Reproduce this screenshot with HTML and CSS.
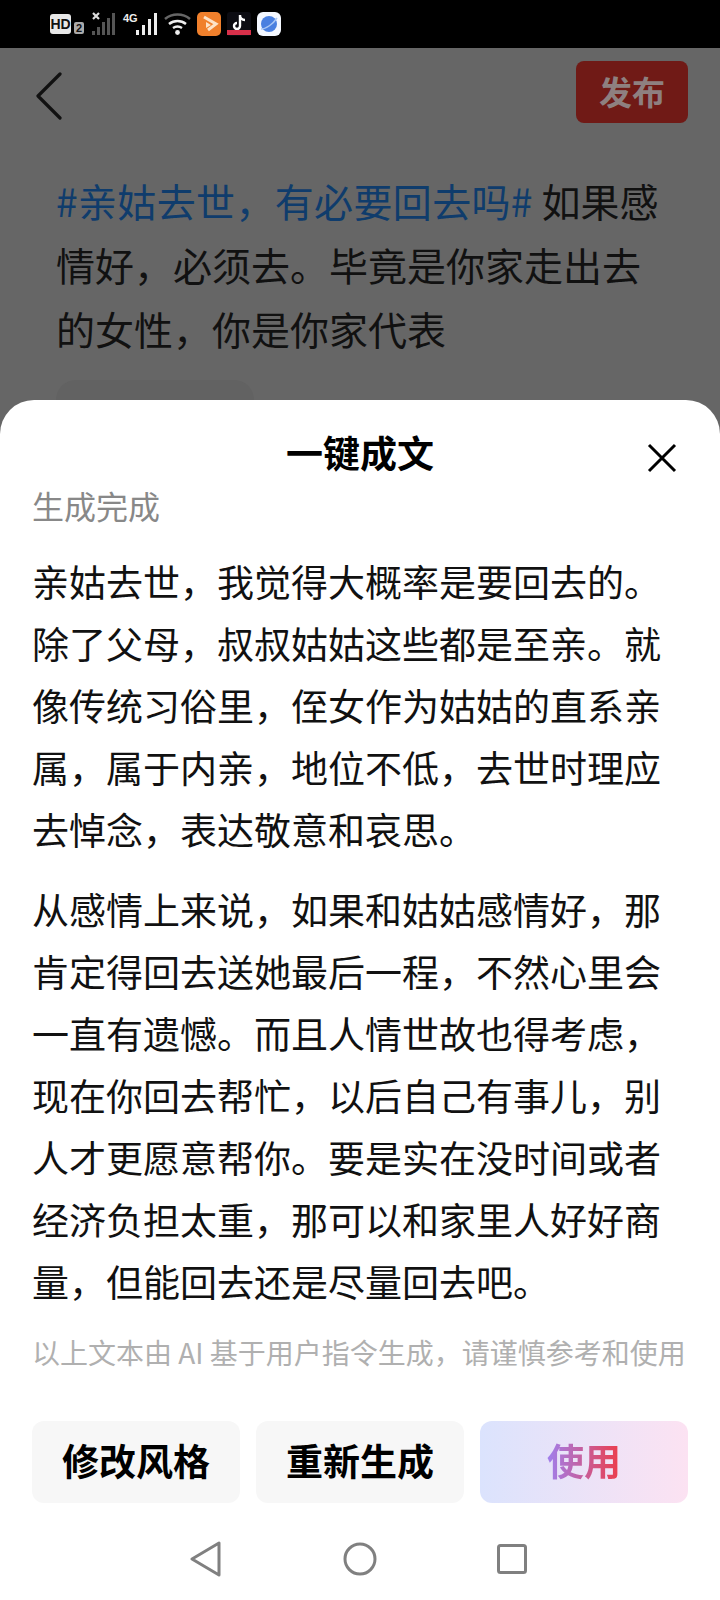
FILE: index.html
```html
<!DOCTYPE HTML>
<html>

	<head>
		<meta http-equiv="Content-Type" content="text/html; charset=utf-8">
		<link rel="stylesheet" href="styles.css">
	</head>

	<body>
		<div class="screen">
			<div class="status">
				<span class="hd">HD</span>
				<span class="sim">2</span>
				<svg class="sig" width="25" height="24" viewBox="0 0 25 24">
					<path d="M2 1l6 6M8 1L2 7" stroke="#ddd" stroke-width="2.2" fill="none"/>
					<g fill="#555">
						<rect x="1" y="19" width="3" height="4"/>
						<rect x="6" y="15" width="3" height="8"/>
						<rect x="11" y="10" width="3" height="13"/>
						<rect x="16" y="6" width="3" height="17"/>
						<rect x="21" y="1" width="3" height="22"/>
					</g>
				</svg>
				<span class="net">4G</span>
				<svg class="sig2" width="23" height="24" viewBox="0 0 23 24">
					<g fill="#eee">
						<rect x="1" y="18" width="3" height="5"/>
						<rect x="7" y="13" width="3" height="10"/>
						<rect x="13" y="7" width="3" height="16"/>
						<rect x="19" y="1" width="3" height="22"/>
					</g>
				</svg>
				<svg class="wifi" width="27" height="24" viewBox="0 0 27 24">
					<path d="M1 7c7-6 18-6 25 0" stroke="#666" stroke-width="2.5" fill="none"/>
					<path d="M5 12c5-4 12-4 17 0" stroke="#eee" stroke-width="2.5" fill="none"/>
					<path d="M9 16c3-2 6-2 9 0" stroke="#eee" stroke-width="2.5" fill="none"/>
					<circle cx="13.5" cy="20.5" r="2.4" fill="#eee"/>
				</svg>
				<svg class="app" width="24" height="24" viewBox="0 0 24 24">
					<rect width="24" height="24" rx="5" fill="#f0802c"/>
					<path d="M7 5l12 7-8 6" stroke="#fde3c8" stroke-width="3" fill="none"/>
					<path d="M9 10l5 3-5 3z" fill="#fde3c8"/>
				</svg>
				<svg class="app" width="24" height="24" viewBox="0 0 24 24">
					<rect width="24" height="24" rx="3" fill="#0c0c12"/>
					<path d="M13 3v11a3 3 0 1 1-3-3M13 3c0 3 2 5 5 5" stroke="#fff" stroke-width="2.4" fill="none"/>
					<rect y="18" width="24" height="5" fill="#d8304a"/>
				</svg>
				<svg class="app" width="24" height="24" viewBox="0 0 24 24">
					<rect width="24" height="24" rx="6" fill="#f4f8ff"/>
					<circle cx="12" cy="12" r="8" fill="#4a80e0"/>
					<path d="M4 17c5 0 12-5 16-11" stroke="#a9c6f4" stroke-width="1.5" fill="none"/>
				</svg>
			</div>

			<div class="behind">
				<div class="bar">
					<svg width="26" height="48" viewBox="0 0 26 48">
						<path d="M24 2L2 24l22 22" stroke="#111" stroke-width="3.2" fill="none" stroke-linecap="round" stroke-linejoin="round"/>
					</svg>
					<div class="publish">发布</div>
				</div>
				<div class="post"><span class="tag">#亲姑去世，有必要回去吗#</span> 如果感情好，必须去。毕竟是你家走出去的女性，你是你家代表</div>
				<div class="chip"></div>
			</div>

			<div class="sheet">
				<div class="head">
					<span></span>
					<div class="title">一键成文</div>
					<svg class="close" width="30" height="30" viewBox="0 0 30 30">
						<path d="M2 2l26 26M28 2L2 28" stroke="#000" stroke-width="3" fill="none"/>
					</svg>
				</div>
				<div class="state">生成完成</div>
				<div class="text">
					<p>亲姑去世，我觉得大概率是要回去的。除了父母，叔叔姑姑这些都是至亲。就像传统习俗里，侄女作为姑姑的直系亲属，属于内亲，地位不低，去世时理应去悼念，表达敬意和哀思。</p>
					<p>从感情上来说，如果和姑姑感情好，那肯定得回去送她最后一程，不然心里会一直有遗憾。而且人情世故也得考虑，现在你回去帮忙，以后自己有事儿，别人才更愿意帮你。要是实在没时间或者经济负担太重，那可以和家里人好好商量，但能回去还是尽量回去吧。</p>
				</div>
				<div class="note">以上文本由 AI 基于用户指令生成，请谨慎参考和使用</div>
				<div class="btns">
					<div class="btn">修改风格</div>
					<div class="btn">重新生成</div>
					<div class="btn use"><span>使用</span></div>
				</div>
				<div class="nav">
					<svg width="32" height="36" viewBox="0 0 32 36">
						<path d="M29 2v32L2 18z" stroke="#808080" stroke-width="3" fill="none" stroke-linejoin="round"/>
					</svg>
					<svg width="34" height="34" viewBox="0 0 34 34">
						<circle cx="17" cy="17" r="15" stroke="#808080" stroke-width="3" fill="none"/>
					</svg>
					<svg width="30" height="30" viewBox="0 0 30 30">
						<rect x="1.5" y="1.5" width="27" height="27" rx="2" stroke="#808080" stroke-width="3" fill="none"/>
					</svg>
				</div>
			</div>
		</div>
	</body>

</html>
```

FILE: styles.css
```css
* {
	margin: 0;
	padding: 0;
	box-sizing: border-box;
}

body {
	font-family: "Noto Sans CJK SC", "Noto Sans", sans-serif;
	background: #666;
}

.screen {
	width: 720px;
	height: 1600px;
	overflow: hidden;
	background: #666;
}

.status {
	height: 48px;
	background: #000;
	display: flex;
	align-items: center;
	padding-left: 50px;
	font-family: "Liberation Sans", sans-serif;
	font-weight: bold;
}

.hd {
	width: 21px;
	height: 20px;
	border-radius: 3px;
	background: #e8e8e8;
	color: #111;
	font-size: 14px;
	line-height: 20px;
	text-align: center;
}

.sim {
	width: 10px;
	height: 12px;
	margin: 8px 0 0 3px;
	border-radius: 2px;
	background: #aaa;
	color: #111;
	font-size: 11px;
	line-height: 12px;
	text-align: center;
}

.sig {
	margin-left: 7px;
}

.net {
	margin: -12px 0 0 7px;
	color: #eee;
	font-size: 11px;
	width: 13px;
}

.sig2 {
	margin-left: -1px;
}

.wifi {
	margin-left: 6px;
}

.app {
	margin-left: 6px;
}

.behind {
	height: 352px;
	overflow: hidden;
}

.bar {
	height: 75px;
	padding: 24px 32px 0 36px;
	display: flex;
	justify-content: space-between;
	align-items: flex-start;
}

.publish {
	width: 112px;
	height: 62px;
	margin-top: -11px;
	border-radius: 8px;
	background: #701a16;
	color: #8e8080;
	font-size: 33px;
	font-weight: bold;
	line-height: 60px;
	text-align: center;
}

.post {
	margin: 0 48px 0 56px;
	padding-top: 45px;
	font-size: 39px;
	line-height: 64px;
	color: #111;
}

.tag {
	color: #0f3c6c;
	letter-spacing: 0.35px;
}

.chip {
	width: 198px;
	height: 60px;
	margin: 20px 0 0 56px;
	border-radius: 20px;
	background: #626262;
}

.sheet {
	height: 1200px;
	background: #fff;
	border-radius: 34px 34px 0 0;
	padding: 0 32px;
}

.head {
	height: 84px;
	padding-top: 20px;
	display: grid;
	grid-template-columns: 1fr auto 1fr;
	align-items: center;
}

.title {
	font-size: 37px;
	font-weight: bold;
	line-height: 60px;
	color: #000;
}

.close {
	justify-self: end;
	margin: 12px 11px 0 0;
}

.state {
	margin-top: -2px;
	font-size: 32px;
	line-height: 46px;
	color: #888;
}

.text {
	margin-top: 22px;
	font-size: 37px;
	line-height: 62px;
	color: #111;
}

.text p {
	margin-bottom: 18px;
}

.note {
	margin-top: 14px;
	font-size: 28px;
	line-height: 44px;
	color: #b0b0b0;
	white-space: nowrap;
}

.btns {
	margin-top: 47px;
	display: flex;
	gap: 16px;
}

.btn {
	width: 208px;
	height: 82px;
	border-radius: 12px;
	background: #f7f7f7;
	font-size: 37px;
	font-weight: bold;
	line-height: 78px;
	text-align: center;
	color: #000;
}

.use {
	background: linear-gradient(90deg, #dbe3fd, #fce2f2);
}

.use span {
	background: linear-gradient(90deg, #a080ee, #ee3c48);
	-webkit-background-clip: text;
	background-clip: text;
	color: transparent;
}

.nav {
	height: 60px;
	margin: 26px 0 0 -32px;
	width: 720px;
	padding-left: 190px;
	display: flex;
	align-items: center;
}

.nav svg:nth-child(2) {
	margin-left: 121px;
}

.nav svg:nth-child(3) {
	margin-left: 120px;
}
```
